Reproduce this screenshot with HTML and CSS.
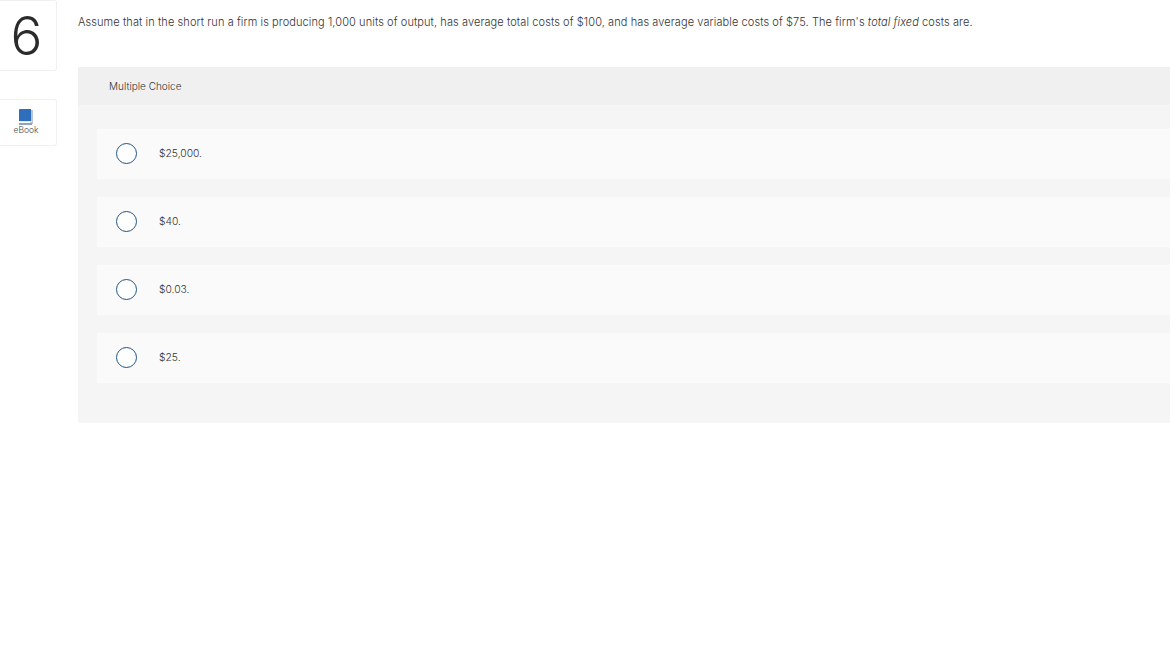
FILE: index.html
```html
<!DOCTYPE html>
<html lang="en">
<head>
    <meta charset="UTF-8">
    <title>Question 6</title>
    <link rel="stylesheet" href="styles.css">
</head>
<body>
    <div class="page">
        <div class="sidebar">
            <div class="number-card">6</div>
            <div class="ebook-card">
                <svg class="book-icon" width="14" height="16" viewBox="0 0 14 16">
                    <rect x="11" y="1" width="3" height="14" fill="#b9c6d8"/>
                    <rect x="0" y="14" width="13" height="2" fill="#8fa3bd"/>
                    <path d="M1 0H12V12H1Q0 12 0 13V1Q0 0 1 0Z" fill="#2f6dbd"/>
                    <rect x="0" y="12" width="13" height="1" fill="#e4e9f0"/>
                </svg>
                <span>eBook</span>
            </div>
        </div>
        <div class="main">
            <p class="question">Assume that in the short run a firm is producing 1,000 units of output, has average total costs of $100, and has average variable costs of $75. The firm's <em>total fixed</em> costs are.</p>
            <div class="panel">
                <div class="panel-header">Multiple Choice</div>
                <div class="choices">
                    <div class="choice"><span class="radio"></span><span>$25,000.</span></div>
                    <div class="choice"><span class="radio"></span><span>$40.</span></div>
                    <div class="choice"><span class="radio"></span><span>$0.03.</span></div>
                    <div class="choice"><span class="radio"></span><span>$25.</span></div>
                </div>
            </div>
        </div>
    </div>
</body>
</html>
```

FILE: styles.css
```css
html, body {
    margin: 0;
    height: 100%;
    background-color: #fff;
    overflow: hidden;
}
body {
    font-family: Inter, sans-serif;
    font-weight: 300;
    color: #333;
}
.page {
    display: flex;
}
.sidebar {
    width: 57px;
    flex-shrink: 0;
}
.number-card {
    height: 71px;
    border: 1px solid #f0f0f0;
    border-left: none;
    border-radius: 0 3px 3px 0;
    box-sizing: border-box;
    font-size: 53px;
    line-height: 70px;
    text-align: center;
    padding-right: 3px;
    color: #2b2b2b;
}
.ebook-card {
    margin-top: 28px;
    height: 47px;
    box-sizing: border-box;
    border: 1px solid #f0f0f0;
    border-left: none;
    border-radius: 0 3px 3px 0;
    display: flex;
    flex-direction: column;
    align-items: center;
    padding: 9px 4px 0 0;
    font-size: 8.5px;
    line-height: 10px;
    color: #444;
}
.book-icon {
    display: block;
}
.main {
    margin-left: 21px;
    flex: 1;
    min-width: 0;
}
.question {
    margin: 0;
    padding-top: 15px;
    height: 67px;
    box-sizing: border-box;
    font-size: 11px;
    letter-spacing: 0.09px;
    line-height: 14px;
    white-space: nowrap;
}
.panel {
    background-color: #f5f5f5;
    border-radius: 3px 0 0 3px;
    height: 356px;
}
.panel-header {
    height: 38px;
    line-height: 39px;
    padding-left: 31px;
    background-color: #f0f0f0;
    font-size: 10px;
}
.choices {
    display: flex;
    flex-direction: column;
    gap: 18px;
    padding: 24px 0 0 19px;
}
.choice {
    height: 50px;
    box-sizing: border-box;
    padding-bottom: 2px;
    background-color: #fafafa;
    display: flex;
    align-items: center;
    font-size: 10.3px;
}
.radio {
    width: 19px;
    height: 19px;
    border: 1.5px solid #1f5482;
    border-radius: 50%;
    background-color: #fff;
    margin: 0 22px 0 19px;
}
```
